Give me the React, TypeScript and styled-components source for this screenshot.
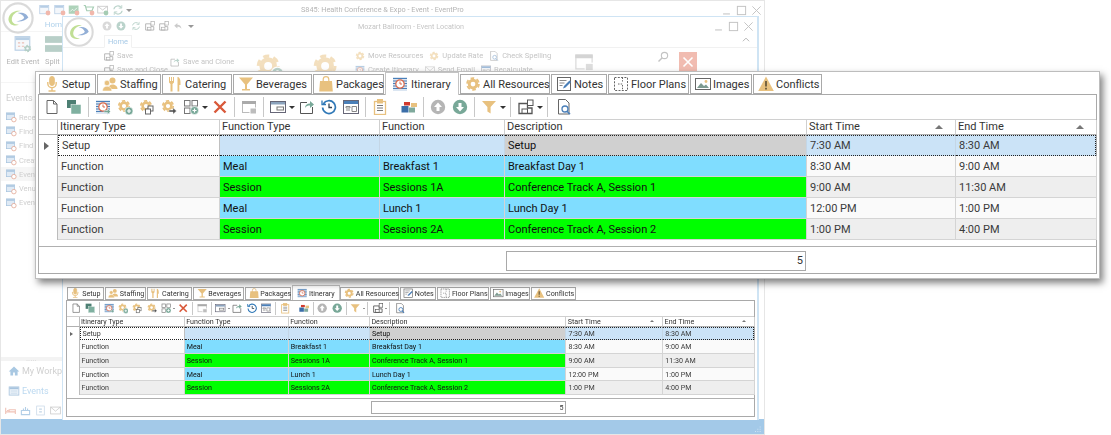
import React from "react";
import styled, { createGlobalStyle } from "styled-components";

const GOLD = "#E8C17F";
const TEAL = "#78A898";
const BLUE = "#4A7FB8";
const RED = "#D9593A";
const COLUMNS = "19px 162px 160px 125px 302px 149px 141px";

const GlobalStyle = createGlobalStyle`
  html, body { margin: 0; padding: 0; background: #fff; }
  body { font-family: Roboto, "Noto Sans", sans-serif; color: #333; overflow: hidden; }
`;

const Page = styled.div`
  position: relative;
  width: 1111px;
  height: 435px;
  overflow: hidden;
  background: #fff;
`;

/* ---------- back window ---------- */
const OuterWindow = styled.div`
  width: 765px;
  height: 435px;
  box-sizing: border-box;
  border: 1px solid #e6e6e6;
  display: flex;
  flex-direction: column;
  background: #fff;
`;
const OuterBody = styled.div`
  flex: 1;
  min-height: 0;
  display: flex;
  flex-direction: column;
  width: 61px;
`;
const OuterHead = styled.div`
  height: 18px;
  padding: 0 2px 0 38px;
  display: flex;
  align-items: center;
  gap: 2.5px;
  opacity: 0.5;
  filter: blur(0.4px);
`;
const LogoWrap = styled.div<{ $x: number; $y: number }>`
  position: absolute;
  left: ${({ $x }) => $x}px;
  top: ${({ $y }) => $y}px;
  opacity: 0.55;
  filter: blur(0.3px);
`;
const OuterTabs = styled.div`
  height: 12px;
  display: flex;
  justify-content: flex-end;
  font-size: 8px;
  line-height: 12px;
  color: #8dbde3;
  filter: blur(0.3px);
  opacity: 0.7;
`;
const OuterRibbon = styled.div`
  height: 52px;
  padding-top: 3px;
  box-sizing: border-box;
  display: flex;
  border-top: 1px solid #eee;
  border-bottom: 1px solid #eee;
  opacity: 0.55;
  filter: blur(0.4px);
  overflow: hidden;
`;
const RibbonBig = styled.div<{ $w: number; $start?: boolean }>`
  width: ${({ $w }) => $w}px;
  display: flex;
  flex-direction: column;
  align-items: ${({ $start }) => ($start ? "flex-start" : "center")};
  flex-shrink: 0;
`;
const RibbonLabel = styled.div`
  font-size: 7.5px;
  line-height: 12px;
  color: #777;
  white-space: nowrap;
  margin-top: 3px;
`;
const Sidebar = styled.div`
  flex: 1;
  min-height: 0;
  display: flex;
  flex-direction: column;
  justify-content: space-between;
  filter: blur(0.4px);
`;
const SideTitle = styled.div`
  font-size: 9px;
  line-height: 14px;
  color: #cfcfcf;
  padding: 8px 0 5px 5px;
`;
const SideItem = styled.div<{ $on?: boolean }>`
  height: 14.3px;
  display: flex;
  align-items: center;
  gap: 1px;
  padding-left: 5px;
  font-size: 7.5px;
  color: #cfcfcf;
  white-space: nowrap;
  overflow: hidden;
  background: ${({ $on }) => ($on ? "#f6f6f6" : "transparent")};
`;
const SideBottom = styled.div`
  padding-bottom: 1px;
`;
const Dots = styled.div`
  height: 4px;
  background: #f3f3f3;
  color: #bbb;
  font-size: 6px;
  line-height: 3px;
  text-align: center;
  letter-spacing: 0.5px;
`;
const NavRow = styled.div<{ $blue?: boolean }>`
  height: 20px;
  display: flex;
  align-items: center;
  gap: 2px;
  padding-left: 7px;
  font-size: 9px;
  white-space: nowrap;
  overflow: hidden;
  color: ${({ $blue }) => ($blue ? "#bcd9f0" : "#d0d0d0")};
`;
const NavIcons = styled.div`
  display: flex;
  gap: 4px;
  padding: 4px 0 2px 4px;
  opacity: 0.6;
`;
const StatusBar = styled.div`
  height: 14px;
  background: #a3c9e8;
  display: flex;
  justify-content: flex-end;
  align-items: flex-end;
  padding: 0 2px 1px 0;
`;

/* ---------- front window ---------- */
const InnerWindow = styled.div`
  position: absolute;
  left: 62px;
  top: 16px;
  width: 697px;
  height: 404px;
  box-sizing: border-box;
  border: 1px solid #cfe4f4;
  border-bottom: 0;
  border-right-width: 2px;
  background: #fff;
  display: flex;
  flex-direction: column;
`;
const InnerTitle = styled.div`
  position: relative;
  height: 18px;
  flex-shrink: 0;
  display: flex;
  align-items: center;
  padding: 0 3px 0 39px;
  gap: 4.3px;
  opacity: 0.5;
  filter: blur(0.4px);
`;
const TitleText = styled.span`
  position: absolute;
  left: 295px;
  font-size: 7.2px;
  color: #888;
  white-space: nowrap;
`;
const OuterTitleText = styled.span`
  position: absolute;
  left: 301px;
  top: 5px;
  font-size: 7.3px;
  color: #b5b5b5;
  white-space: nowrap;
  filter: blur(0.4px);
`;
const WinControls = styled.div`
  margin-left: auto;
  display: flex;
  gap: 4px;
  align-items: center;
`;
const InnerTabs = styled.div`
  height: 12px;
  padding: 0 6px 0 41px;
  flex-shrink: 0;
  display: flex;
  justify-content: space-between;
  border-bottom: 1px solid #e8e8e8;
  opacity: 0.6;
  filter: blur(0.4px);
`;
const HomeTab = styled.div`
  box-sizing: border-box;
  width: 28px;
  height: 13px;
  text-align: center;
  font-size: 7.5px;
  line-height: 12px;
  color: #6ea8d8;
  border: 1px solid #e8e8e8;
  border-bottom-color: #fff;
  background: #fff;
`;
const InnerRibbon = styled.div`
  display: flex;
  padding: 1px 0 0 41px;
  height: 36px;
  flex-shrink: 0;
  opacity: 0.5;
  overflow: hidden;
  filter: blur(0.4px);
`;
const RibbonSlot = styled.div<{ $w: number; $top?: number }>`
  width: ${({ $w }) => $w}px;
  padding-top: ${({ $top }) => $top ?? 0}px;
  flex-shrink: 0;
`;
const RibbonCol = styled.div`
  display: flex;
  flex-direction: column;
  gap: 1px;
`;
const RibbonRow = styled.div`
  display: flex;
  gap: 6px;
`;
const RibbonItem = styled.div`
  display: flex;
  align-items: center;
  gap: 3px;
  height: 13px;
  font-size: 7.5px;
  color: #888;
  white-space: nowrap;
`;
const CloseTile = styled.div`
  width: 18px;
  height: 19px;
  background: #e57b66;
  color: #fff;
  display: flex;
  align-items: center;
  justify-content: center;
`;
const LowerGrid = styled.div`
  margin-top: auto;
  padding: 0 0 5px 5px;
  zoom: 0.65;
  filter: blur(0.45px);
`;

const FloatingPanel = styled.div`
  position: absolute;
  left: 35px;
  top: 71px;
  width: 1065px;
  height: 208px;
  box-sizing: border-box;
  background: #fff;
  border: 1px solid #bdbdbd;
  padding: 3px 2px;
  box-shadow: 3px 4px 7px rgba(0, 0, 0, 0.5);
`;

/* ---------- tabbed grid ---------- */
const GridFrame = styled.div`
  width: 1059px;
  font-size: 11px;
`;
const TabStrip = styled.div`
  display: flex;
  align-items: flex-end;
  height: 19px;
  padding-left: 1px;
  gap: 1px;
  position: relative;
  z-index: 1;
`;
const Tab = styled.div<{ $w: number; $active?: boolean }>`
  box-sizing: border-box;
  width: ${({ $w }) => $w}px;
  height: ${({ $active }) => ($active ? 23 : 20)}px;
  margin-bottom: ${({ $active }) => ($active ? -1 : 0)}px;
  padding-left: ${({ $active }) => ($active ? 6 : 4)}px;
  display: flex;
  align-items: center;
  gap: ${({ $active }) => ($active ? 3 : 2)}px;
  white-space: nowrap;
  color: #333;
  background: #fff;
  border: 1px solid #a9a9a9;
  border-bottom: ${({ $active }) => ($active ? "0" : "1px solid #a9a9a9")};
  ${({ $active }) => ($active ? "border-color: #c4c4c4;" : "")}
  flex-shrink: 0;
`;
const GridBody = styled.div`
  height: 180px;
  box-sizing: border-box;
  border: 1px solid #a9a9a9;
  display: flex;
  flex-direction: column;
`;
const Toolbar = styled.div`
  height: 25px;
  box-sizing: border-box;
  flex-shrink: 0;
  display: flex;
  align-items: center;
  padding-left: 2px;
  border-bottom: 1px solid #d0d0d0;
`;
const ToolButton = styled.div<{ $gap?: number }>`
  width: 22px;
  height: 22px;
  margin-left: ${({ $gap }) => $gap ?? 0}px;
  flex-shrink: 0;
  display: flex;
  align-items: center;
  justify-content: center;
`;
const ToolSep = styled.div`
  width: 1px;
  height: 20px;
  margin: 0 3px;
  background: #c8c8c8;
  flex-shrink: 0;
`;
const Caret = styled.div`
  width: 0;
  height: 0;
  margin: 0 1px 0 0;
  border: 3px solid transparent;
  border-top: 3px solid #333;
  border-bottom: 0;
  flex-shrink: 0;
`;
const Table = styled.div`
  display: grid;
  grid-template-columns: ${COLUMNS};
  grid-auto-rows: 21px;
  grid-template-rows: 15px;
`;
const Corner = styled.div<{ $head?: boolean }>`
  border-right: 1px solid #bcbcbc;
  display: flex;
  align-items: center;
  justify-content: center;
  ${({ $head }) => ($head ? "border-bottom: 1px solid #b0b0b0;" : "")}
`;
const Mark = styled.div`
  width: 0;
  height: 0;
  margin-right: 3px;
  border: 4px solid transparent;
  border-left: 5px solid #666;
  border-right: 0;
`;
const Head = styled.div`
  box-sizing: border-box;
  border-right: 1px solid #cfcfcf;
  border-bottom: 1px solid #b0b0b0;
  padding: 0 12px 0 2px;
  display: flex;
  align-items: center;
  justify-content: space-between;
  line-height: 14px;
  white-space: nowrap;
  &:last-child { border-right: 0; }
`;
const SortUp = styled.div`
  width: 0;
  height: 0;
  border: 4px solid transparent;
  border-bottom: 4px solid #777;
  border-top: 0;
`;

type Tone = "white" | "sel" | "grey" | "meal" | "session" | "odd" | "even";
const TONES: Record<Tone, string> = {
  white: "#ffffff",
  sel: "#cbe3f7",
  grey: "#d0d0d0",
  meal: "#80ddff",
  session: "#00ff00",
  odd: "#fafafa",
  even: "#eeeeee",
};
const Cell = styled.div<{ $tone: Tone; $focus?: boolean; $first?: boolean; $last?: boolean }>`
  box-sizing: border-box;
  padding: 0 3px;
  display: flex;
  align-items: center;
  white-space: nowrap;
  font-size: 11px;
  color: ${({ $tone }) => ($tone === "meal" || $tone === "session" || $tone === "grey" ? "#111" : "#3a3a3a")};
  background: ${({ $tone }) => TONES[$tone]};
  border-right: 1px solid #d4d4d4;
  border-bottom: 1px solid #d4d4d4;
  ${({ $focus }) => ($focus ? "border-top: 1px dotted #222; border-bottom: 1px dotted #222; border-right-color: #c4d6e6;" : "")}
  ${({ $first }) => ($first ? "border-left: 1px dotted #222; border-right: 1px solid #c0c0c0;" : "")}
  ${({ $last }) => ($last ? "border-right: 1px dotted #222; margin-right: 1px;" : "")}
`;
const FooterRow = styled.div`
  margin-top: auto;
  height: 27px;
  box-sizing: border-box;
  border-top: 1px solid #b0b0b0;
  display: grid;
  grid-template-columns: ${COLUMNS};
  align-items: center;
`;
const FooterCell = styled.div`
  grid-column: 5;
  height: 20px;
  box-sizing: border-box;
  border: 1px solid #a9a9a9;
  margin: 1px 1px 0 1px;
  padding-right: 2px;
  text-align: right;
  line-height: 18px;
`;

/* ---------- drawn icons ---------- */
const Svg = ({ size = 16, children }: { size?: number; children: React.ReactNode }) => (
  <svg width={size} height={size} viewBox="0 0 16 16" style={{ flexShrink: 0, display: "block" }}>
    {children}
  </svg>
);
const Cog = ({ x = 7, y = 7, r = 4, c = GOLD }: { x?: number; y?: number; r?: number; c?: string }) => (
  <g fill="none" stroke={c}>
    <circle cx={x} cy={y} r={r} strokeWidth={r * 0.75} />
    <circle cx={x} cy={y} r={r * 1.55} strokeWidth={r * 0.5} strokeDasharray={`${r * 0.95} ${r * 0.67}`} />
  </g>
);
const PlusBadge = ({ x = 12, y = 12, r = 4 }: { x?: number; y?: number; r?: number }) => (
  <g>
    <circle cx={x} cy={y} r={r} fill={TEAL} stroke="#fff" strokeWidth="0.6" />
    <path d={`M${x - r / 2} ${y}h${r}M${x} ${y - r / 2}v${r}`} stroke="#fff" strokeWidth="1.2" />
  </g>
);
const ItineraryDoc = () => (
  <g>
    <rect x="1" y="1" width="14" height="14" fill="#dbe6f2" />
    <path d="M1 2.5h14M1 5h14M1 7.5h14M1 10h14M1 12.5h14" stroke={BLUE} strokeWidth="1.2" />
    <circle cx="8" cy="8" r="4.2" fill="#fff" stroke="#d8694c" strokeWidth="1.2" />
    <path d="M8 5.5V8h2" fill="none" stroke="#d8694c" strokeWidth="1" />
  </g>
);

const Icons: Record<string, React.ReactNode> = {
  mic: (
    <g fill="none" stroke={GOLD}>
      <rect x="5.7" y="0.5" width="4.6" height="9" rx="2.3" fill={GOLD} />
      <path d="M3.8 6v1.6a4.2 4.2 0 0 0 8.4 0V6M8 12v2.5M4.5 15h7" strokeWidth="1.4" />
    </g>
  ),
  staff: (
    <g fill={GOLD}>
      <circle cx="10.5" cy="4.5" r="3" />
      <path d="M6.5 13c0-3 1.5-4.5 4-4.5s5 1.5 5 4.5z" />
      <circle cx="5" cy="7" r="2.7" stroke="#fff" strokeWidth="0.5" />
      <path d="M0.5 15c0-3 1.8-4.8 4.5-4.8S9.8 12 9.8 15z" stroke="#fff" strokeWidth="0.5" />
    </g>
  ),
  fork: (
    <g fill={GOLD}>
      <path d="M2 1h1v4h1V1h1v4h1V1h1v5.5L5.5 8v7.5h-2V8L2 6.5z" />
      <path d="M10.5 1c2 0 3 2.5 3 6v2h-1.2v6.5h-1.8z" />
    </g>
  ),
  glass: <path d="M1 1.5h14L9 8.5V13h3v1.5H4V13h3V8.5z" fill={GOLD} />,
  bag: (
    <g>
      <path d="M2 5h12l.8 10.5H1.2z" fill={GOLD} />
      <path d="M5.2 7V3.5a2.8 2.8 0 0 1 5.6 0V7" fill="none" stroke={GOLD} strokeWidth="1.2" />
    </g>
  ),
  itin: <ItineraryDoc />,
  gear: <Cog x={8} y={8} r={3.8} />,
  notes: (
    <g>
      <rect x="1.5" y="1.5" width="13" height="13" fill="#fff" stroke="#666" />
      <path d="M3.5 4.5h7M3.5 7h5M3.5 9.5h3" stroke="#888" />
      <path d="M7 12.5l1-2.5 5.5-5.5 1.5 1.5-5.5 5.5z" fill={BLUE} />
    </g>
  ),
  floor: (
    <g fill="none" stroke="#666">
      <rect x="1.5" y="1.5" width="13" height="13" strokeDasharray="2 1.3" />
      <path d="M9.5 1.5v4M9.5 9v5.5M5 8h4.5" strokeDasharray="1.5 1.2" />
    </g>
  ),
  image: (
    <g>
      <rect x="0.5" y="2.5" width="15" height="11" fill="#fff" stroke="#666" />
      <path d="M2 12l4-5 3 3 2-1.5 3 3.5z" fill="#7d9a90" />
      <circle cx="11" cy="5.5" r="1.4" fill={GOLD} />
    </g>
  ),
  warn: (
    <g>
      <path d="M8 0.5l7.8 14.5H.2z" fill={GOLD} />
      <path d="M8 5v5.5M8 11.8v1.6" stroke="#6b5a3a" strokeWidth="1.8" />
    </g>
  ),
  page: (
    <g fill="#fff" stroke="#666">
      <path d="M3 1.5h6.5L13 5v9.5H3z" />
      <path d="M9.5 1.5V5H13" fill="none" />
    </g>
  ),
  clone: (
    <g>
      <rect x="1" y="1" width="9" height="8" fill="#4d7f73" />
      <rect x="5" y="5.5" width="10" height="9.5" fill="#7fb0a0" stroke="#fff" strokeWidth="0.5" />
    </g>
  ),
  itinGo: (
    <g>
      <ItineraryDoc />
      <path d="M9 11.5h3.5V9.5l3 3-3 3v-2H9z" fill={TEAL} stroke="#fff" strokeWidth="0.4" />
    </g>
  ),
  gearAdd: (
    <g>
      <Cog x={7} y={7} r={3.4} />
      <PlusBadge />
    </g>
  ),
  gearCopy: (
    <g>
      <Cog x={7} y={7} r={3.4} />
      <rect x="9" y="7" width="5" height="5" fill="#fff" stroke="#666" />
      <rect x="6.5" y="10" width="5" height="5" fill="#fff" stroke="#666" />
    </g>
  ),
  gearGo: (
    <g>
      <Cog x={7} y={7} r={3.4} />
      <path d="M8 11h4V8.8l3.5 3.2-3.5 3.2V13H8z" fill="#555" stroke="#fff" strokeWidth="0.4" />
    </g>
  ),
  gridAdd: (
    <g fill="#fff" stroke="#777">
      <rect x="1.5" y="1.5" width="5.5" height="5.5" />
      <rect x="9" y="1.5" width="5.5" height="5.5" />
      <rect x="1.5" y="9" width="5.5" height="5.5" />
      <PlusBadge x={11.5} y={11.5} r={4} />
    </g>
  ),
  del: <path d="M2.5 2.5l11 11M13.5 2.5l-11 11" stroke={RED} strokeWidth="2.4" />,
  win: (
    <g>
      <rect x="1.5" y="2.5" width="13" height="11" fill="#fff" stroke="#bbb" />
      <rect x="1" y="2" width="14" height="3" fill="#aaa" />
      <rect x="9" y="9" width="6.5" height="6" fill="#bdbdbd" stroke="#fff" />
    </g>
  ),
  calWin: (
    <g>
      <rect x="0.5" y="2.5" width="15" height="11" fill="#fff" stroke="#667" />
      <rect x="1" y="3" width="14" height="2.5" fill="#8ba3bd" />
      <rect x="7" y="8" width="6.5" height="3" fill="#fff" stroke="#777" />
    </g>
  ),
  export: (
    <g>
      <path d="M8 3.5H1.5v11h12V8" fill="none" stroke="#555" />
      <path d="M6 9c0-3 2-4.5 5-4.5V2l4 3.5L11 9V6.5C9 6.5 7 7 6 9z" fill={TEAL} />
    </g>
  ),
  history: (
    <g fill="none" stroke="#2f78b7" strokeWidth="1.7">
      <path d="M2.4 5A6.4 6.4 0 1 1 1.6 8.5" />
      <path d="M8 4.5V8.5h3" strokeWidth="1.3" stroke="#345" />
      <path d="M1 1.5V5.5h4" strokeWidth="1.3" />
    </g>
  ),
  calPanel: (
    <g>
      <rect x="0.5" y="1.5" width="15" height="13" fill="#fff" stroke="#667" />
      <rect x="1" y="2" width="14" height="3" fill="#4a7fb8" />
      <path d="M3 7.5h4v1.5H3zM9 7.5h4.5v5H9zM3 11h4" fill="none" stroke="#888" />
    </g>
  ),
  clip: (
    <g fill="none" stroke={GOLD}>
      <rect x="2.5" y="2.5" width="11" height="13" strokeWidth="1.3" />
      <rect x="5.5" y="0.5" width="5" height="3.5" fill={GOLD} />
      <path d="M5 6.5h6M5 9h6M5 11.5h6" stroke="#777" />
    </g>
  ),
  colors: (
    <g>
      <rect x="3" y="3" width="6" height="3.5" fill="#d23b2e" />
      <rect x="10" y="4" width="6" height="4" fill={GOLD} />
      <rect x="0.5" y="7" width="7" height="6.5" fill="#3b6ea8" />
      <rect x="8" y="8.5" width="6" height="5" fill="#7fa99c" />
    </g>
  ),
  up: (
    <g>
      <circle cx="8" cy="8" r="7.2" fill="#b5b5b5" />
      <path d="M8 3.5L12 8H9.5v4h-3V8H4z" fill="#fff" />
    </g>
  ),
  down: (
    <g>
      <circle cx="8" cy="8" r="7.2" fill={TEAL} />
      <path d="M8 12.5L12 8H9.5V4h-3v4H4z" fill="#fff" />
    </g>
  ),
  funnel: <path d="M1 2h14L9.6 8v6.5l-3.2-2V8z" fill={GOLD} />,
  save: (
    <g fill="none" stroke="#555">
      <path d="M1 4.5h8.5V9H14v5.5H1z" strokeWidth="1.3" />
      <rect x="4" y="10" width="5.5" height="4.5" />
      <rect x="9.5" y="1" width="5.5" height="5.5" fill="#fff" />
    </g>
  ),
  preview: (
    <g>
      <path d="M2.5 0.5h7L13 4v11H2.5z" fill="#fff" stroke="#666" />
      <circle cx="9" cy="10" r="3" fill="#fff" stroke={BLUE} strokeWidth="1.3" />
      <path d="M11 12.2l3 3" stroke={BLUE} strokeWidth="1.6" />
    </g>
  ),
  search: (
    <g fill="none" stroke="#888" strokeWidth="1.5">
      <circle cx="10" cy="6" r="4.2" />
      <path d="M7 9l-5 5" strokeWidth="2" />
    </g>
  ),
  refresh: (
    <g fill="none" stroke={TEAL} strokeWidth="1.6">
      <path d="M2.5 7a5.5 5.5 0 0 1 10-2M13.5 9a5.5 5.5 0 0 1-10 2" />
      <path d="M13 1.5V5.5H9M3 14.5V10.5H7" strokeWidth="1.2" />
    </g>
  ),
  back: <path d="M7 3L2 7.5 7 12V9c3 0 5 1 6.5 3.5C13 8 11 6 7 6z" fill="#999" />,
  home: <path d="M8 2L1 8.5h2.2V14h3.6v-4h2.4v4h3.6V8.5H15z" fill="#a9c8e2" />,
  mail: (
    <g fill="#fff" stroke="#999">
      <rect x="1" y="3" width="14" height="10" />
      <path d="M1 3l7 6 7-6" fill="none" />
    </g>
  ),
  bed: <path d="M1 4v9M1 10h14v3M15 10V7H6v3M3 8h2" fill="none" stroke="#e59a87" strokeWidth="1.6" />,
  cake: <path d="M2 14V8h12v6zM5 8V5M8 8V3M11 8V5" fill="none" stroke="#7faed6" strokeWidth="1.6" />,
  contact: (
    <g fill="none" stroke="#9cbad6">
      <rect x="2.5" y="1.5" width="11" height="13" />
      <path d="M6 6h4M6 10h4" strokeWidth="1.6" />
    </g>
  ),
  calEvent: (
    <g>
      <rect x="1.5" y="2.5" width="13" height="11" fill="#e7eff7" stroke="#a8c4de" />
      <rect x="2" y="3" width="12" height="2.5" fill="#a8c4de" />
      <path d="M4 8h8M4 11h8" stroke="#c7d9ea" />
    </g>
  ),
  calGear: (
    <g>
      <rect x="1" y="1.5" width="13" height="12" fill="#eef3f8" stroke="#7fa8d0" />
      <rect x="1.5" y="2" width="12" height="2.5" fill="#7fa8d0" />
      <path d="M3.5 7h2M7 7h2M3.5 10h2M7 10h2" stroke="#d98a7a" />
      <Cog x={12} y={12} r={1.8} c={TEAL} />
    </g>
  ),
  split: (
    <g>
      <rect x="0" y="1" width="16" height="6" fill="#7fa99c" />
      <rect x="0" y="9" width="16" height="6" fill="#7fa99c" />
    </g>
  ),
  qatRed: (
    <g>
      <rect x="1" y="2" width="12" height="11" fill="#eaf1f8" stroke="#6f9ccc" />
      <rect x="1.5" y="2.5" width="11" height="2.5" fill="#6f9ccc" />
      <circle cx="12" cy="12" r="3.2" fill="#e5735c" />
    </g>
  ),
  qatGreen: (
    <g>
      <rect x="1" y="2" width="13" height="11" fill="#5fa878" />
      <path d="M3 10l3-3 2 2 4-4" stroke="#fff" fill="none" />
      <circle cx="12" cy="12" r="3.2" fill="#e5735c" />
    </g>
  ),
  qatCart: (
    <g>
      <path d="M1 2h2l2 7h7l2-5H4" fill="none" stroke="#4e9a6a" strokeWidth="1.6" />
      <circle cx="12" cy="12" r="3.2" fill="#e5735c" />
    </g>
  ),
  qatMail: (
    <g>
      <rect x="1" y="3" width="13" height="9" fill="#fff" stroke="#888" />
      <path d="M1 3l6.5 5L14 3" fill="none" stroke="#888" />
      <circle cx="12" cy="12" r="3.2" fill="#4e9a6a" />
    </g>
  ),
  listDoc: (
    <g>
      <rect x="0.5" y="2.5" width="11" height="9" fill="#dfeaf5" stroke="#a8c4de" />
      <rect x="1" y="3" width="10" height="2" fill="#a8c4de" />
      <circle cx="10.5" cy="11.5" r="3" fill="#fff" stroke="#e2a18e" />
    </g>
  ),
  logo: (
    <g>
      <circle cx="8" cy="8" r="7.3" fill="#fff" stroke="#bdbdbd" strokeWidth="1.1" />
      <path d="M3.2 8.6C3.6 5.2 6.6 4 9.5 4.4 7 4.8 5 6.4 4.9 8.8c.1 1.6 1.3 2.6 3.6 2.6-2.6.8-5 .1-5.3-2.8z" fill="#8ec63f" />
      <path d="M7.8 5.5c2.6-.6 4.8.5 5.4 2.3-1.6 1.6-3.6 2.2-6 1.9 2-.3 3.5-.9 3.9-1.8-.4-1.2-1.6-2.1-3.3-2.4z" fill="#3b6fb6" />
    </g>
  ),
};

const TABS = [
  { label: "Setup", icon: "mic", w: 57 },
  { label: "Staffing", icon: "staff", w: 64 },
  { label: "Catering", icon: "fork", w: 70 },
  { label: "Beverages", icon: "glass", w: 79 },
  { label: "Packages", icon: "bag", w: 71 },
  { label: "Itinerary", icon: "itin", w: 74, active: true },
  { label: "All Resources", icon: "gear", w: 90 },
  { label: "Notes", icon: "notes", w: 56 },
  { label: "Floor Plans", icon: "floor", w: 81 },
  { label: "Images", icon: "image", w: 62 },
  { label: "Conflicts", icon: "warn", w: 69 },
];

const ROWS: { cells: [string, string, string, string, string, string]; fn: Tone; alt: Tone }[] = [
  { cells: ["Function", "Meal", "Breakfast 1", "Breakfast Day 1", "8:30 AM", "9:00 AM"], fn: "meal", alt: "odd" },
  { cells: ["Function", "Session", "Sessions 1A", "Conference Track A, Session 1", "9:00 AM", "11:30 AM"], fn: "session", alt: "even" },
  { cells: ["Function", "Meal", "Lunch 1", "Lunch Day 1", "12:00 PM", "1:00 PM"], fn: "meal", alt: "odd" },
  { cells: ["Function", "Session", "Sessions 2A", "Conference Track A, Session 2", "1:00 PM", "4:00 PM"], fn: "session", alt: "even" },
];

const Tool = ({ name, gap }: { name: string; gap?: number }) => (
  <ToolButton $gap={gap}>
    <Svg>{Icons[name]}</Svg>
  </ToolButton>
);

const ItineraryGrid = () => (
  <GridFrame>
    <TabStrip>
      {TABS.map((t) => (
        <Tab key={t.label} $w={t.w} $active={t.active}>
          <Svg>{Icons[t.icon]}</Svg>
          {t.label}
        </Tab>
      ))}
    </TabStrip>
    <GridBody>
      <Toolbar>
        <Tool name="page" />
        <Tool name="clone" />
        <ToolSep />
        <Tool name="itinGo" />
        <Tool name="gearAdd" />
        <Tool name="gearCopy" />
        <Tool name="gearGo" />
        <Tool name="gridAdd" />
        <Caret />
        <Tool name="del" />
        <ToolSep />
        <Tool name="win" />
        <ToolSep />
        <Tool name="calWin" />
        <Caret />
        <Tool name="export" />
        <Tool name="history" />
        <Tool name="calPanel" />
        <ToolSep />
        <Tool name="clip" />
        <Tool name="colors" gap={7} />
        <ToolSep />
        <Tool name="up" />
        <Tool name="down" />
        <ToolSep />
        <Tool name="funnel" />
        <Caret />
        <ToolSep />
        <Tool name="save" gap={1} />
        <Caret />
        <ToolSep />
        <Tool name="preview" gap={2} />
      </Toolbar>
      <Table>
        <Corner $head />
        <Head>Itinerary Type</Head>
        <Head>Function Type</Head>
        <Head>Function</Head>
        <Head>Description</Head>
        <Head>Start Time<SortUp /></Head>
        <Head>End Time<SortUp /></Head>

        <Corner><Mark /></Corner>
        <Cell $tone="white" $focus $first>Setup</Cell>
        <Cell $tone="sel" $focus />
        <Cell $tone="sel" $focus />
        <Cell $tone="grey" $focus>Setup</Cell>
        <Cell $tone="sel" $focus>7:30 AM</Cell>
        <Cell $tone="sel" $focus $last>8:30 AM</Cell>

        {ROWS.map((r, i) => (
          <React.Fragment key={i}>
            <Corner />
            <Cell $tone={r.alt}>{r.cells[0]}</Cell>
            <Cell $tone={r.fn}>{r.cells[1]}</Cell>
            <Cell $tone={r.fn}>{r.cells[2]}</Cell>
            <Cell $tone={r.fn}>{r.cells[3]}</Cell>
            <Cell $tone={r.alt}>{r.cells[4]}</Cell>
            <Cell $tone={r.alt}>{r.cells[5]}</Cell>
          </React.Fragment>
        ))}
      </Table>
      <FooterRow>
        <FooterCell>5</FooterCell>
      </FooterRow>
    </GridBody>
  </GridFrame>
);

const Controls = () => (
  <WinControls>
    <Svg size={11}><path d="M3 13h10" stroke="#888" strokeWidth="1.5" /></Svg>
    <Svg size={11}><rect x="2" y="2" width="12" height="12" fill="none" stroke="#888" strokeWidth="1.4" /></Svg>
    <Svg size={11}><path d="M2 2l12 12M14 2L2 14" stroke="#888" strokeWidth="1.4" /></Svg>
  </WinControls>
);

export default function App() {
  return (
    <Page>
      <GlobalStyle />
      <OuterWindow>
        <OuterHead>
          <Svg size={12}>{Icons.qatRed}</Svg>
          <Svg size={12}>{Icons.qatRed}</Svg>
          <Svg size={12}>{Icons.qatGreen}</Svg>
          <Svg size={12}>{Icons.qatCart}</Svg>
          <Svg size={12}>{Icons.qatMail}</Svg>
          <Svg size={12}>{Icons.refresh}</Svg>
          <Caret />
          <Controls />
        </OuterHead>
        <OuterBody>
          <OuterTabs>Hom</OuterTabs>
          <OuterRibbon>
            <RibbonBig $w={44}>
              <Svg size={18}>{Icons.calGear}</Svg>
              <RibbonLabel>Edit Event</RibbonLabel>
            </RibbonBig>
            <RibbonBig $w={17} $start>
              <Svg size={18}>{Icons.split}</Svg>
              <RibbonLabel>Split</RibbonLabel>
            </RibbonBig>
          </OuterRibbon>
          <Sidebar>
            <div>
              <SideTitle>Events</SideTitle>
              {["Rece", "Find E", "Find S", "Creat", "Even", "Venu", "Even"].map((s, i) => (
                <SideItem key={i} $on={i === 4}>
                  <Svg size={12}>{Icons.listDoc}</Svg>
                  {s}
                </SideItem>
              ))}
            </div>
            <SideBottom>
              <Dots>.....</Dots>
              <NavRow>
                <Svg size={12}>{Icons.home}</Svg>
                My Workp
              </NavRow>
              <NavRow $blue>
                <Svg size={12}>{Icons.calEvent}</Svg>
                Events
              </NavRow>
              <NavIcons>
                <Svg size={11}>{Icons.bed}</Svg>
                <Svg size={11}>{Icons.cake}</Svg>
                <Svg size={11}>{Icons.contact}</Svg>
                <Svg size={11}>{Icons.mail}</Svg>
              </NavIcons>
            </SideBottom>
          </Sidebar>
        </OuterBody>
        <StatusBar>
          <Svg size={12}>
            <path d="M13 14h1M10 14h1M7 14h1M13 11h1M10 11h1M13 8h1" stroke="#dfeaf5" strokeWidth="1.4" />
          </Svg>
        </StatusBar>
      </OuterWindow>
      <OuterTitleText>S845: Health Conference &amp; Expo - Event - EventPro</OuterTitleText>
      <LogoWrap $x={2} $y={2}><Svg size={32}>{Icons.logo}</Svg></LogoWrap>

      <InnerWindow>
        <InnerTitle>
          <Svg size={10}>{Icons.up}</Svg>
          <Svg size={10}>{Icons.down}</Svg>
          <Svg size={10}>{Icons.refresh}</Svg>
          <Svg size={10}>{Icons.save}</Svg>
          <Svg size={10}>{Icons.save}</Svg>
          <Svg size={10}>{Icons.back}</Svg>
          <Caret />
          <TitleText>Mozart Ballroom - Event Location</TitleText>
          <Controls />
        </InnerTitle>
        <InnerTabs>
          <HomeTab>Home</HomeTab>
          <Svg size={10}><path d="M3 10l5-5 5 5" fill="none" stroke="#888" strokeWidth="1.6" /></Svg>
        </InnerTabs>
        <InnerRibbon>
          <RibbonSlot $w={66}>
            <RibbonCol>
              <RibbonItem><Svg size={10}>{Icons.save}</Svg>Save</RibbonItem>
              <RibbonItem><Svg size={10}>{Icons.save}</Svg>Save and Close</RibbonItem>
            </RibbonCol>
          </RibbonSlot>
          <RibbonSlot $w={85} $top={6}>
            <RibbonItem><Svg size={10}>{Icons.export}</Svg>Save and Clone</RibbonItem>
          </RibbonSlot>
          <RibbonSlot $w={57} $top={2}>
            <Svg size={30}><Cog x={7} y={8} r={3.4} /><PlusBadge x={12} y={12} r={3.4} /></Svg>
          </RibbonSlot>
          <RibbonSlot $w={43} $top={2}>
            <Svg size={30}><Cog x={7} y={8} r={3.4} /></Svg>
          </RibbonSlot>
          <RibbonSlot $w={219}>
            <RibbonCol>
              <RibbonRow>
                <RibbonItem><Svg size={10}>{Icons.gear}</Svg>Move Resources</RibbonItem>
                <RibbonItem><Svg size={10}>{Icons.gear}</Svg>Update Rate</RibbonItem>
                <RibbonItem><Svg size={10}>{Icons.preview}</Svg>Check Spelling</RibbonItem>
              </RibbonRow>
              <RibbonRow>
                <RibbonItem><Svg size={10}>{Icons.itin}</Svg>Create Itinerary</RibbonItem>
                <RibbonItem><Svg size={10}>{Icons.mail}</Svg>Send Email</RibbonItem>
                <RibbonItem><Svg size={10}>{Icons.calPanel}</Svg>Recalculate</RibbonItem>
              </RibbonRow>
            </RibbonCol>
          </RibbonSlot>
          <RibbonSlot $w={83} $top={3}>
            <Svg size={20}>{Icons.win}</Svg>
          </RibbonSlot>
          <RibbonSlot $w={22} $top={2}>
            <Svg size={12}>{Icons.search}</Svg>
          </RibbonSlot>
          <RibbonSlot $w={18} $top={3}>
            <CloseTile>
              <Svg size={12}><path d="M2 2l12 12M14 2L2 14" stroke="#fff" strokeWidth="2.2" /></Svg>
            </CloseTile>
          </RibbonSlot>
        </InnerRibbon>
        <LowerGrid>
          <ItineraryGrid />
        </LowerGrid>
      </InnerWindow>
      <LogoWrap $x={64} $y={17}><Svg size={30}>{Icons.logo}</Svg></LogoWrap>

      <FloatingPanel>
        <ItineraryGrid />
      </FloatingPanel>
    </Page>
  );
}
